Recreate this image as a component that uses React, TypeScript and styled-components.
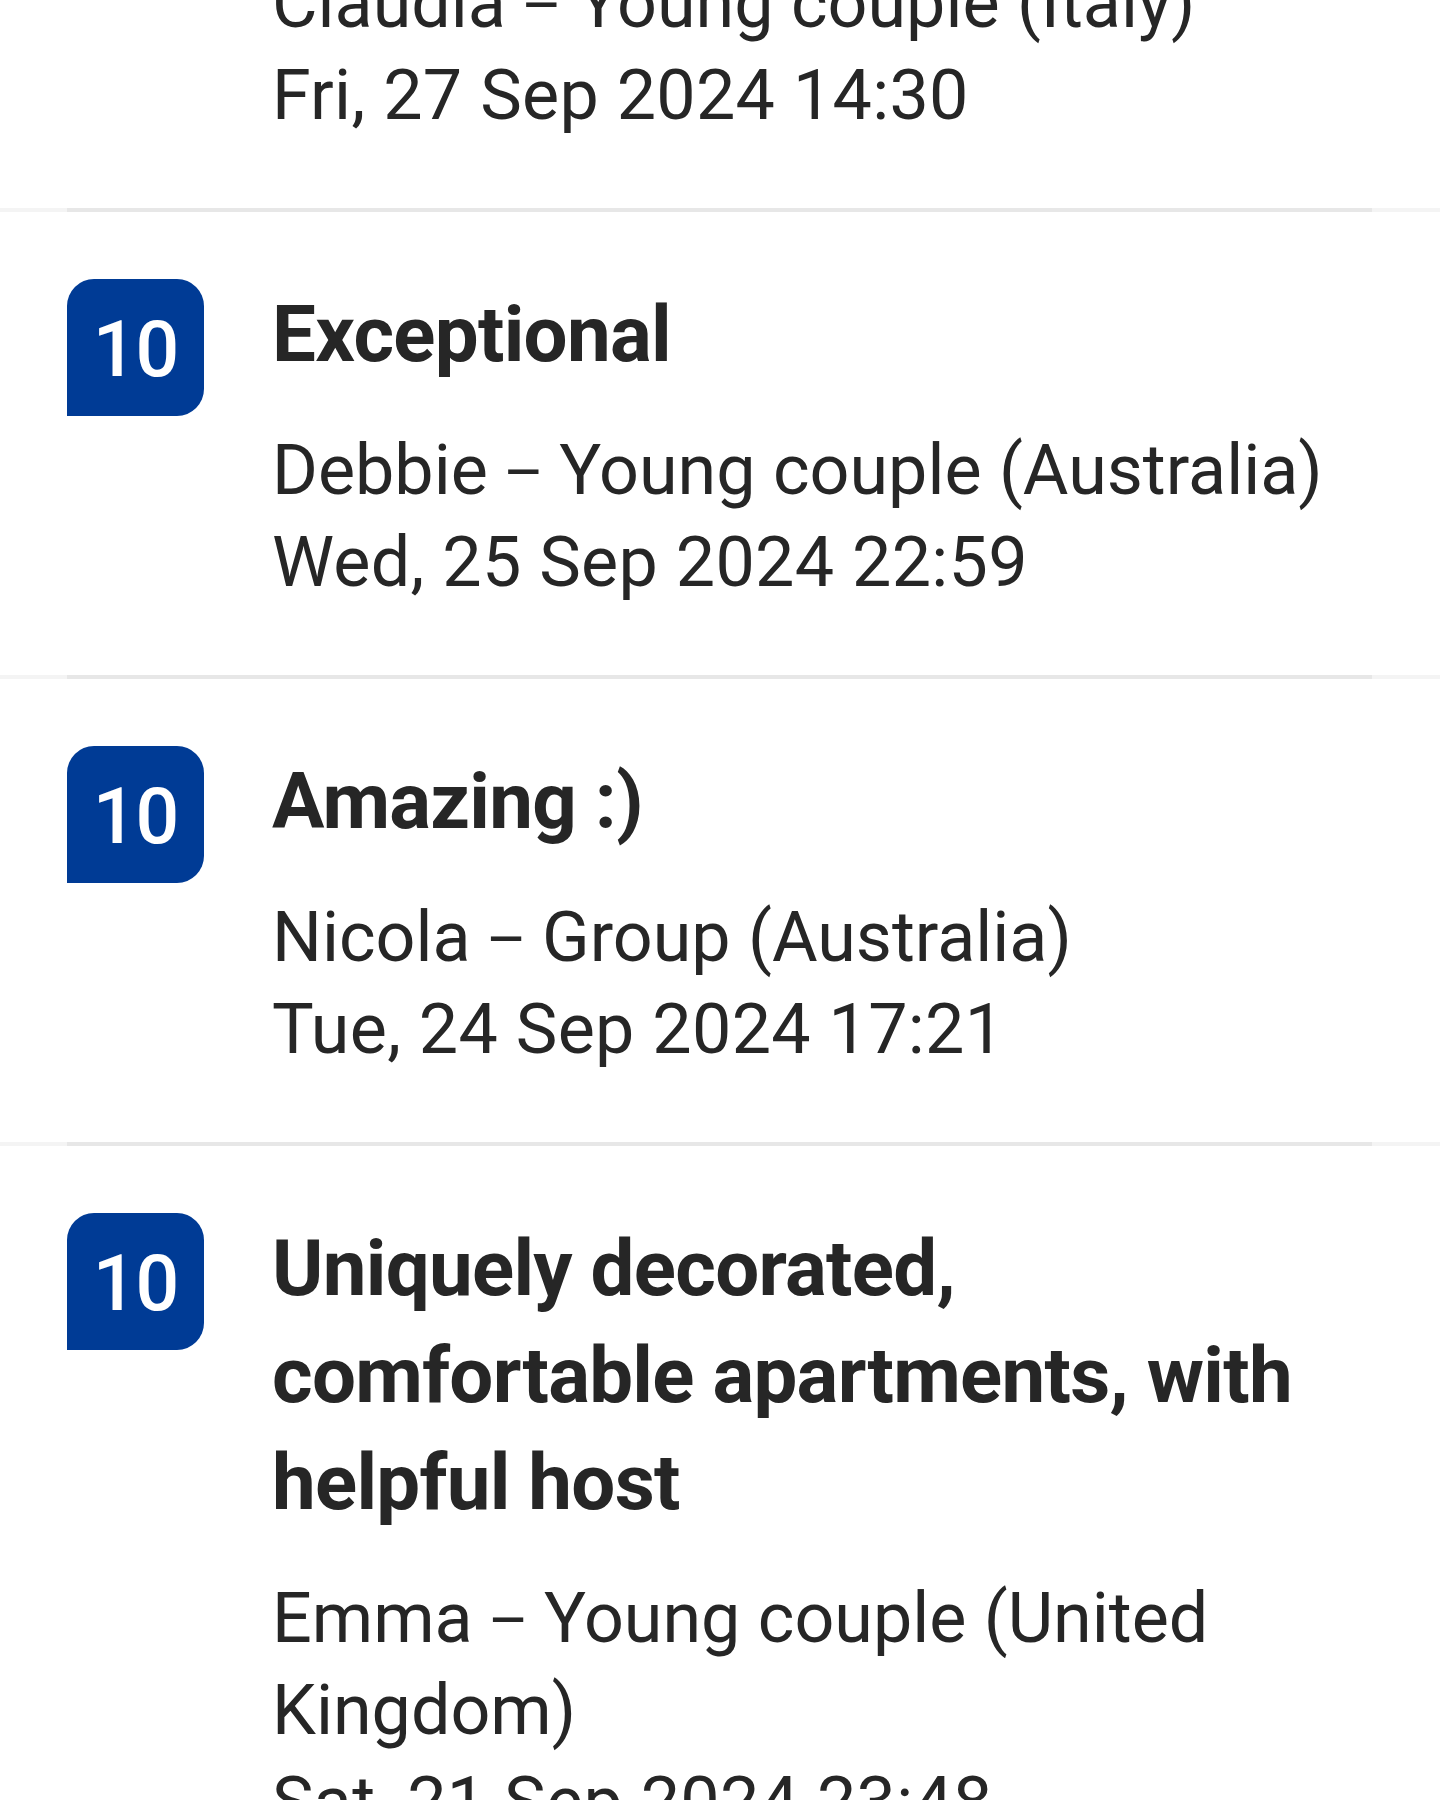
import React from 'react';
import styled, { createGlobalStyle } from 'styled-components';

const GlobalStyle = createGlobalStyle`
  html, body {
    margin: 0;
    padding: 0;
    background: #ffffff;
  }

  body {
    font-family: Roboto, 'Noto Sans', 'Liberation Sans', sans-serif;
    color: #262626;
    overflow: hidden;
  }
`;

const Page = styled.div`
  width: 1440px;
  height: 1800px;
  overflow: hidden;
  background: #ffffff;
`;

// the list is scrolled: the first review is only half visible
const ReviewList = styled.ul`
  list-style: none;
  margin: -255px 0 0;
  padding: 0;
`;

const Review = styled.li`
  display: flex;
  flex-direction: column;
`;

const ReviewRow = styled.div`
  display: flex;
  align-items: flex-start;
  gap: 68px;
  padding: 67px 68px 67px 67px;
`;

const ScoreBadge = styled.div`
  flex: 0 0 137px;
  width: 137px;
  height: 137px;
  display: flex;
  align-items: center;
  justify-content: center;
  padding-top: 5px;
  box-sizing: border-box;
  background-color: #003b95;
  border-radius: 27px 27px 27px 0;
  color: #ffffff;
  font-size: 77px;
  font-weight: 500;
  line-height: 1;
  letter-spacing: -1px;
`;

const ReviewBody = styled.div`
  flex: 1;
  min-width: 0;
  display: flex;
  flex-direction: column;
  gap: 36px;
  padding-top: 2px;
`;

const Title = styled.h3`
  margin: 0;
  max-width: 1070px;
  font-size: 78px;
  font-weight: 700;
  line-height: 107px;
  letter-spacing: -0.7px;
`;

const Meta = styled.div`
  display: flex;
  flex-direction: column;
`;

const GuestLine = styled.span`
  font-size: 70px;
  font-weight: 400;
  line-height: 92px;
`;

// the separator in the guest line is a little narrower than Roboto's en dash
const Dash = styled.span`
  font-size: 62px;
  line-height: 0;
`;

const DateLine = styled.span`
  font-size: 70px;
  font-weight: 400;
  line-height: 92px;
  letter-spacing: 0.3px;
`;

const Divider = styled.div`
  height: 4px;
  background: #f4f4f4;
  display: flex;

  &::after {
    content: '';
    flex: 1;
    margin: 0 68px 0 67px;
    background: #e7e7e7;
  }
`;

interface IReview {
  score: number;
  title: string;
  name: string;
  group: string;
  date: string;
}

const reviews: IReview[] = [
  {
    score: 10,
    title: 'Superb',
    name: 'Claudia',
    group: 'Young couple (Italy)',
    date: 'Fri, 27 Sep 2024 14:30',
  },
  {
    score: 10,
    title: 'Exceptional',
    name: 'Debbie',
    group: 'Young couple (Australia)',
    date: 'Wed, 25 Sep 2024 22:59',
  },
  {
    score: 10,
    title: 'Amazing :)',
    name: 'Nicola',
    group: 'Group (Australia)',
    date: 'Tue, 24 Sep 2024 17:21',
  },
  {
    score: 10,
    title: 'Uniquely decorated, comfortable apartments, with helpful host',
    name: 'Emma',
    group: 'Young couple (United Kingdom)',
    date: 'Sat, 21 Sep 2024 23:48',
  },
];

const App: React.FC = () => {
  return (
    <Page>
      <GlobalStyle />
      <ReviewList>
        {reviews.map((review, idx) => (
          <Review key={idx}>
            <ReviewRow>
              <ScoreBadge>{review.score}</ScoreBadge>
              <ReviewBody>
                <Title>{review.title}</Title>
                <Meta>
                  <GuestLine>
                    {review.name}
                    <Dash> – </Dash>
                    {review.group}
                  </GuestLine>
                  <DateLine>{review.date}</DateLine>
                </Meta>
              </ReviewBody>
            </ReviewRow>
            <Divider />
          </Review>
        ))}
      </ReviewList>
    </Page>
  );
};

export default App;
